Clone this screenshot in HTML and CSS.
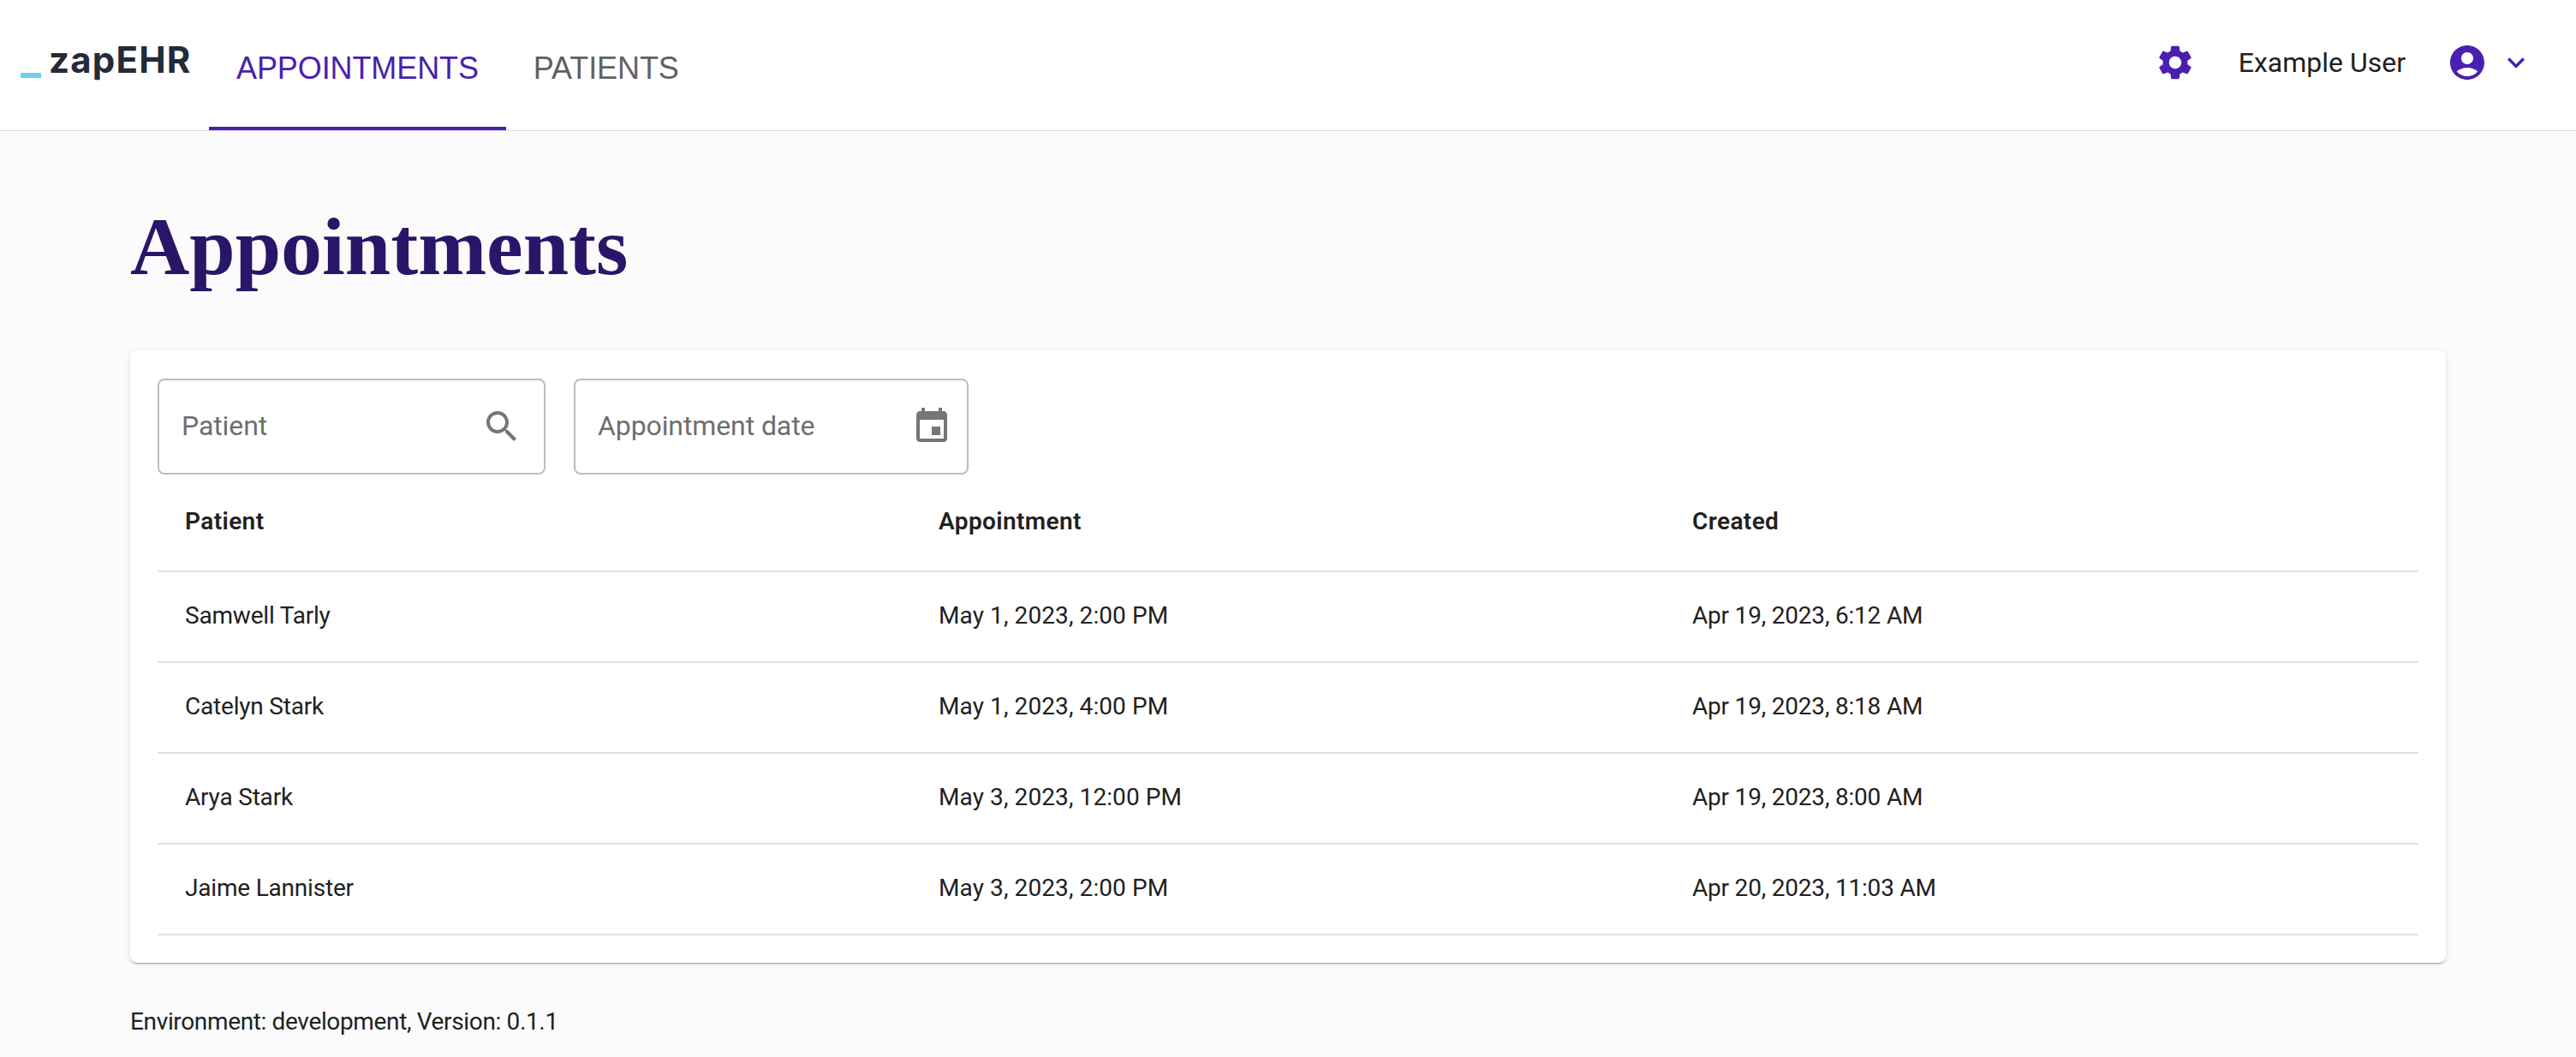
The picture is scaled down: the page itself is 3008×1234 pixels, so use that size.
FILE: index.html
```html
<!DOCTYPE html>
<html lang="en">
<head>
    <meta charset="UTF-8" />
    <meta name="viewport" content="width=device-width, initial-scale=1" />
    <title>Appointments</title>
    <link rel="stylesheet" href="styles.css">
</head>
<body>

<header class="topbar">
    <div class="logo">
        <span class="logo-bar"></span>
        <span class="logo-text">zapEHR</span>
    </div>
    <nav class="tabs">
        <a class="tab tab-active">APPOINTMENTS</a>
        <a class="tab">PATIENTS</a>
    </nav>
    <div class="user">
        <svg class="icon-settings" viewBox="0 0 24 24"><path d="M19.14 12.94c.04-.3.06-.61.06-.94 0-.32-.02-.64-.07-.94l2.03-1.58c.18-.14.23-.41.12-.61l-1.92-3.32c-.12-.22-.37-.29-.59-.22l-2.39.96c-.5-.38-1.03-.7-1.62-.94l-.36-2.54c-.04-.24-.24-.41-.48-.41h-3.84c-.24 0-.43.17-.47.41l-.36 2.54c-.59.24-1.13.57-1.62.94l-2.39-.96c-.22-.08-.47 0-.59.22L2.74 8.87c-.12.21-.08.47.12.61l2.03 1.58c-.05.3-.09.63-.09.94s.02.64.07.94l-2.03 1.58c-.18.14-.23.41-.12.61l1.92 3.32c.12.22.37.29.59.22l2.39-.96c.5.38 1.03.7 1.62.94l.36 2.54c.05.24.24.41.48.41h3.84c.24 0 .44-.17.47-.41l.36-2.54c.59-.24 1.13-.56 1.62-.94l2.39.96c.22.08.47 0 .59-.22l1.92-3.32c.12-.22.07-.47-.12-.61l-2.01-1.58zM12 15.6c-1.98 0-3.6-1.62-3.6-3.6s1.62-3.6 3.6-3.6 3.6 1.62 3.6 3.6-1.62 3.6-3.6 3.6z"/></svg>
        <span class="user-name">Example User</span>
        <svg class="icon-account" viewBox="0 0 24 24"><path d="M12 2C6.48 2 2 6.48 2 12s4.48 10 10 10 10-4.48 10-10S17.52 2 12 2zm0 4c1.93 0 3.5 1.57 3.5 3.5S13.93 13 12 13s-3.5-1.57-3.5-3.5S10.07 6 12 6zm0 14c-2.03 0-4.43-.82-6.14-2.88C7.55 15.8 9.68 15 12 15s4.45.8 6.14 2.12C16.43 19.18 14.03 20 12 20z"/></svg>
        <svg class="icon-chevron" viewBox="0 0 24 24"><path d="M7.41 8.59 12 13.17l4.59-4.58L18 10l-6 6-6-6 1.41-1.41z"/></svg>
    </div>
</header>

<main class="content">
    <h1 class="page-title">Appointments</h1>

    <section class="card">
        <div class="filters">
            <div class="field field-patient">
                <span class="placeholder">Patient</span>
                <svg class="field-icon" viewBox="0 0 24 24"><path d="M15.5 14h-.79l-.28-.27C15.41 12.59 16 11.11 16 9.5 16 5.91 13.09 3 9.5 3S3 5.91 3 9.5 5.91 16 9.5 16c1.61 0 3.09-.59 4.23-1.57l.27.28v.79l5 4.99L20.49 19l-4.99-5zm-6 0C7.01 14 5 11.99 5 9.5S7.01 5 9.5 5 14 7.01 14 9.5 11.99 14 9.5 14z"/></svg>
            </div>
            <div class="field field-date">
                <span class="placeholder">Appointment date</span>
                <svg class="field-icon" viewBox="0 0 24 24"><path d="M17 12h-5v5h5v-5zM16 1v2H8V1H6v2H5c-1.11 0-1.99.9-1.99 2L3 19c0 1.1.89 2 2 2h14c1.1 0 2-.9 2-2V5c0-1.1-.9-2-2-2h-1V1h-2zm3 18H5V8h14v11z"/></svg>
            </div>
        </div>

        <table class="appointments">
            <thead>
                <tr>
                    <th>Patient</th>
                    <th>Appointment</th>
                    <th>Created</th>
                </tr>
            </thead>
            <tbody>
                <tr>
                    <td>Samwell Tarly</td>
                    <td>May 1, 2023, 2:00 PM</td>
                    <td>Apr 19, 2023, 6:12 AM</td>
                </tr>
                <tr>
                    <td>Catelyn Stark</td>
                    <td>May 1, 2023, 4:00 PM</td>
                    <td>Apr 19, 2023, 8:18 AM</td>
                </tr>
                <tr>
                    <td>Arya Stark</td>
                    <td>May 3, 2023, 12:00 PM</td>
                    <td>Apr 19, 2023, 8:00 AM</td>
                </tr>
                <tr>
                    <td>Jaime Lannister</td>
                    <td>May 3, 2023, 2:00 PM</td>
                    <td>Apr 20, 2023, 11:03 AM</td>
                </tr>
            </tbody>
        </table>
    </section>

    <p class="footer-note">Environment: development, Version: 0.1.1</p>
</main>

</body>
</html>
```

FILE: styles.css
```css
* {
    box-sizing: border-box;
}
body {
    margin: 0;
    font-family: Roboto, "Liberation Sans", Arial, sans-serif;
    background-color: #fbfbfb;
    color: #212121;
}

/* Barra superior */
.topbar {
    display: flex;
    align-items: stretch;
    height: 153px;
    padding-left: 24px;
    background-color: #fff;
    border-bottom: 1px solid #d9d9d9;
}
.logo {
    display: flex;
    align-items: flex-start;
    gap: 9px;
    width: 220px;
    padding-top: 46px;
}
.logo-bar {
    width: 24px;
    height: 6px;
    margin-top: 39px;
    background-color: #6fcdf2;
}
.logo-text {
    font-family: Inter, "Liberation Sans", sans-serif;
    font-size: 42px;
    font-weight: 700;
    line-height: 48px;
    letter-spacing: 1.2px;
    color: #232b38;
}
.tabs {
    display: flex;
}
.tab {
    padding: 60px 32px 0;
    font-family: "Liberation Sans", Arial, sans-serif;
    font-size: 36px;
    line-height: 40px;
    letter-spacing: -0.1px;
    color: #616161;
}
.tab-active {
    color: #4a1fb0;
    border-bottom: 4px solid #4a1fb0;
}
.user {
    display: flex;
    align-items: center;
    margin-left: auto;
    padding-bottom: 6px;
    padding-right: 50px;
}
.user svg {
    fill: #4a1fb0;
}
.icon-settings {
    width: 48px;
    height: 48px;
}
.user-name {
    margin-left: 50px;
    font-size: 32px;
    color: #212121;
}
.icon-account {
    width: 48px;
    height: 48px;
    margin-left: 48px;
}
.icon-chevron {
    width: 40px;
    height: 40px;
    margin-left: 13px;
}

/* Contenido */
.content {
    padding: 0 152px;
}
.page-title {
    margin: 0;
    padding-top: 80px;
    height: 256px;
    font-family: "Liberation Serif", "Times New Roman", serif;
    font-size: 96px;
    line-height: 110px;
    font-weight: 700;
    color: #2a1668;
}
.card {
    height: 715px;
    padding: 33px 32px 0;
    background-color: #fff;
    border-radius: 8px;
    box-shadow: 0 2px 2px -1px rgba(0, 0, 0, 0.35), 0 1px 6px rgba(0, 0, 0, 0.1);
}
.filters {
    display: flex;
    gap: 33px;
}
.field {
    display: flex;
    align-items: center;
    justify-content: space-between;
    height: 112px;
    padding-left: 26px;
    background-color: #fff;
    border: 2px solid #bdbdbd;
    border-radius: 8px;
}
.field-patient {
    width: 453px;
    padding-right: 25px;
}
.field-date {
    width: 461px;
    padding-right: 17px;
}
.placeholder {
    font-size: 32px;
    letter-spacing: -0.1px;
    margin-bottom: 2px;
    color: #6e6e6e;
}
.field-icon {
    width: 48px;
    height: 48px;
    fill: #757575;
}

/* Tabla */
.appointments {
    width: 100%;
    border-collapse: collapse;
    table-layout: fixed;
    font-size: 28px;
    text-align: left;
}
.appointments th, .appointments td {
    padding: 0 32px 3px;
    border-bottom: 2px solid #e0e0e0;
}
.appointments th {
    height: 113px;
    font-weight: 600;
    letter-spacing: 0.4px;
    color: #212121;
}
.appointments td {
    height: 106px;
    letter-spacing: -0.2px;
    color: #212121;
}
.appointments td:nth-child(2) {
    letter-spacing: 0.1px;
}
.footer-note {
    margin: 52px 0 0;
    font-size: 28px;
    line-height: 34px;
    letter-spacing: -0.35px;
    color: #212121;
}
```
